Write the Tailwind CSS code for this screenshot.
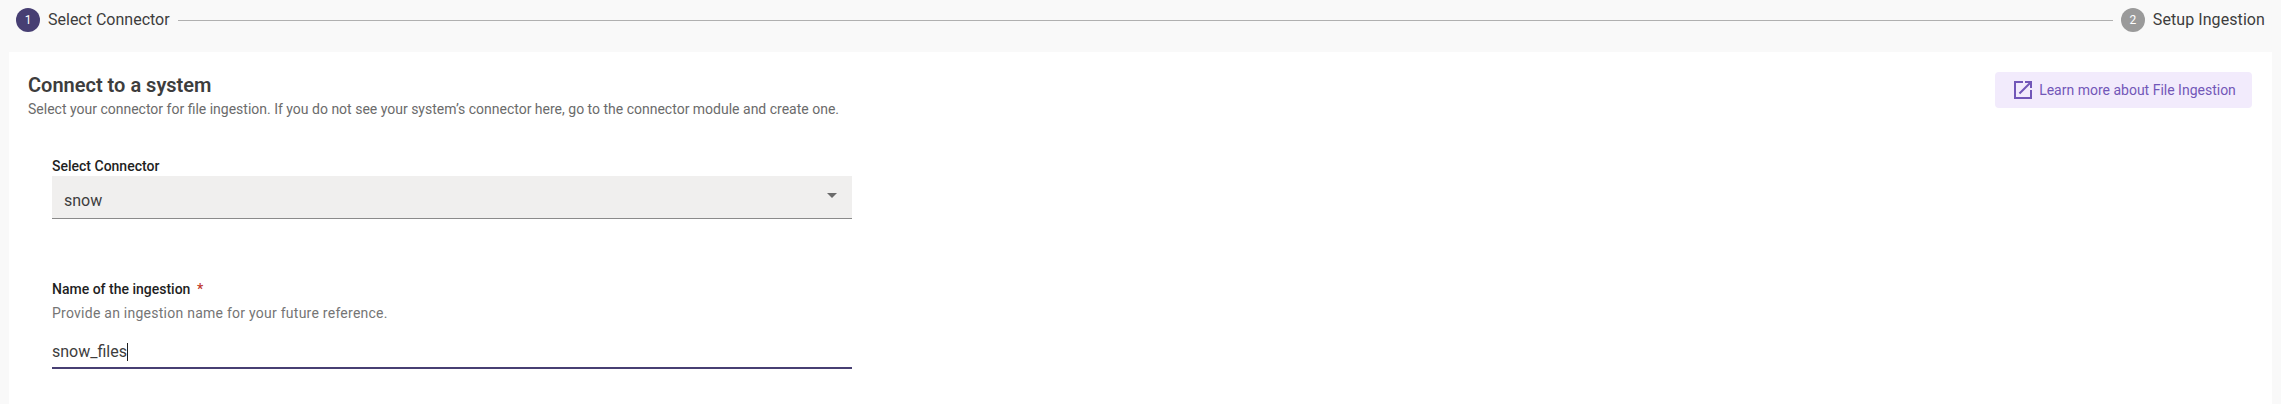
<!DOCTYPE html>
<html lang="en">
<head>
    <meta charset="UTF-8">
    <title>File Ingestion</title>
    <script src="https://cdn.jsdelivr.net/npm/@tailwindcss/browser@4"></script>
</head>
<body class="bg-[#f9f9f9] font-['Roboto',sans-serif] h-[404px] overflow-hidden">
    <!-- stepper -->
    <div class="flex items-center h-[40px] pl-[16px] pr-[16px]">
        <div class="w-[24px] h-[24px] rounded-full bg-[#473f73] text-white text-[12px] flex items-center justify-center">1</div>
        <span class="ml-[8px] text-[16px] text-[#3d3d3d]">Select Connector</span>
        <div class="flex-1 h-px bg-[#b0b0b0] mx-[8px]"></div>
        <div class="w-[24px] h-[24px] rounded-full bg-[#9a9a9a] text-white text-[12px] flex items-center justify-center">2</div>
        <span class="ml-[8px] text-[16px] tracking-[0.08px] text-[#3d3d3d]">Setup Ingestion</span>
    </div>

    <!-- card -->
    <div class="mt-[12px] mx-[9px] bg-white h-[352px] pl-[19px] pr-[20px] pt-[20px]">
        <div class="flex justify-between items-start">
            <div>
                <h2 class="text-[20px] leading-[26px] font-semibold text-[#3d3d3d]">Connect to a system</h2>
                <p class="text-[14px] leading-[20px] mt-[1px] text-[#6b6b6b]">Select your connector for file ingestion. If you do not see your system’s connector here, go to the connector module and create one.</p>
            </div>
            <button class="flex items-center justify-center w-[257px] h-[36px] rounded-[4px] bg-[#f2ebfc] text-[14px] text-[#7257b8]">
                <svg class="w-[24px] h-[24px] mr-[4px]" viewBox="0 0 24 24" fill="#7257b8"><path d="M19 19H5V5h7V3H3v18h18v-9h-2v7zM14 3v2h3.59l-9.83 9.83 1.41 1.41L19 6.41V10h2V3h-7z"/></svg>
                Learn more about File Ingestion
            </button>
        </div>

        <div class="pl-[24px] w-[824px]">
            <label class="block mt-[38px] text-[14px] leading-[18px] font-medium text-[#1f1f1f]">Select Connector</label>
            <div class="mt-[1px] h-[43px] bg-[#f0efee] border-b border-[#8a8a8a] flex items-center justify-between pl-[12px] pr-[15px]">
                <span class="text-[16px] text-[#3d3d3d] mt-[8px]">snow</span>
                <div class="w-0 h-0 border-x-[5px] border-x-transparent border-t-[5px] border-t-[#6b6b6b] mb-[4px]"></div>
            </div>

            <label class="block mt-[61px] text-[14px] leading-[18px] font-medium text-[#1f1f1f]">Name of the ingestion <span class="ml-[3px] text-[#c0392b]">*</span></label>
            <p class="mt-[5px] text-[14px] leading-[20px] tracking-[0.25px] text-[#757575]">Provide an ingestion name for your future reference.</p>
            <div class="mt-[9px] h-[37px] border-b-2 border-[#473f73] flex items-center">
                <span class="text-[16px] text-[#3d3d3d] mt-[5px]">snow_files</span><span class="w-px h-[18px] bg-[#1f1f1f] mt-[5px]"></span>
            </div>
        </div>
    </div>
</body>
</html>
